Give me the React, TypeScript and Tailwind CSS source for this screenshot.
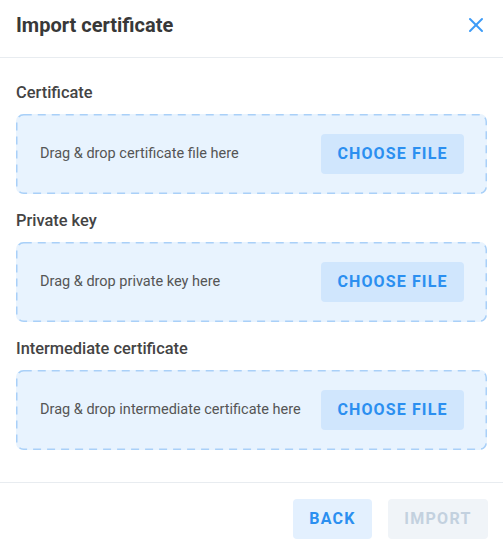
import { X } from 'lucide-react'

const ZONES = [
  { label: 'Certificate', hint: 'Drag & drop certificate file here' },
  { label: 'Private key', hint: 'Drag & drop private key here' },
  { label: 'Intermediate certificate', hint: 'Drag & drop intermediate certificate here' },
]

export default function App() {
  return (
    <div className="w-[503px] h-[548px] bg-white font-['Roboto',sans-serif] flex flex-col">
      <div className="h-[58px] shrink-0 flex items-center justify-between pl-4 pr-[15px] border-b border-[#e8ecf0]">
        <h1 className="text-[20px] font-bold text-[#383838] leading-none -mt-2">Import certificate</h1>
        <button type="button" className="text-[#3d9bf7] -mt-2">
          <X size={24} strokeWidth={2} />
        </button>
      </div>

      <div className="flex-1 px-4 pt-[26px]">
        {ZONES.map((z) => (
          <div key={z.label} className="mb-[18px]">
            <p className="text-[16.4px] font-medium text-[#444] leading-[18px] mb-[12px]">{z.label}</p>
            <div className="relative h-[80px] rounded-[7px] bg-[#e8f3fe] flex items-center justify-between pl-6 pr-[23px]">
              {/* dashed outline drawn as svg so the dash length matches */}
              <svg className="absolute inset-0 pointer-events-none" width="100%" height="100%">
                <rect
                  x="0.75"
                  y="0.75"
                  width="calc(100% - 1.5px)"
                  height="calc(100% - 1.5px)"
                  rx="7"
                  fill="none"
                  stroke="#a9d0f8"
                  strokeWidth="1.5"
                  strokeDasharray="8 6"
                />
              </svg>
              <span className="text-[14.5px] text-[#555]">{z.hint}</span>
              <button
                type="button"
                className="relative h-10 w-[143px] rounded-[4px] bg-[#d0e6fd] text-[#2b8ff0] text-[16px] font-bold tracking-[0.07em]"
              >
                CHOOSE FILE
              </button>
            </div>
          </div>
        ))}
      </div>

      <div className="h-[66px] shrink-0 border-t border-[#e8ecf0] flex items-center justify-end gap-4 px-[15px] pt-[6px]">
        <button
          type="button"
          className="h-10 w-[79px] rounded-[4px] bg-[#e3f0fe] text-[#2b8ff0] text-[16px] font-bold tracking-[0.08em]"
        >
          BACK
        </button>
        <button
          type="button"
          disabled
          className="h-10 w-[100px] rounded-[4px] bg-[#f0f4f8] text-[#c3d1df] text-[16px] font-bold tracking-[0.08em]"
        >
          IMPORT
        </button>
      </div>
    </div>
  )
}
